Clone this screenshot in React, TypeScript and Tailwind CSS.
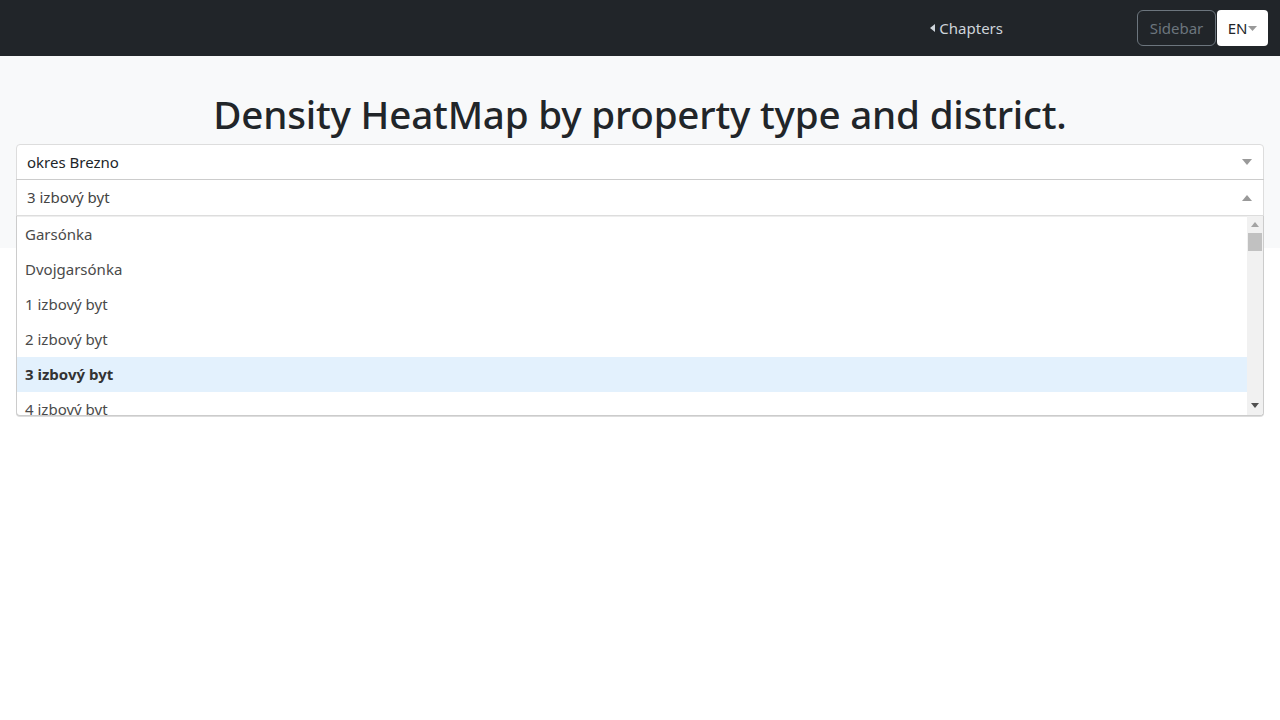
import React from 'react';

const options = ['Garsónka', 'Dvojgarsónka', '1 izbový byt', '2 izbový byt', '3 izbový byt', '4 izbový byt'];

const Caret = ({ up = false }: { up?: boolean }) => (
  <svg width="10" height="6" viewBox="0 0 10 6" className="text-[#999]">
    {up ? <path d="M0 6 L5 0 L10 6 Z" fill="currentColor" /> : <path d="M0 0 L10 0 L5 6 Z" fill="currentColor" />}
  </svg>
);

export default function App() {
  const selected = '3 izbový byt';
  return (
    <div className="min-h-[720px] bg-white text-[#212529]" style={{ fontFamily: '"Noto Sans", "Open Sans", sans-serif' }}>
      <nav className="h-14 bg-[#212529] flex items-center justify-end pr-3">
        <a className="flex items-center gap-1 text-[15px] text-[#ced4da] mr-[134px]">
          <svg width="5" height="8" viewBox="0 0 5 8">
            <path d="M5 0 L0 4 L5 8 Z" fill="#ced4da" />
          </svg>
          Chapters
        </a>
        <button className="h-9 w-[79px] rounded-md border border-[#6c757d] text-[#6c757d] text-[15px]">Sidebar</button>
        <button className="h-9 w-[51px] ml-px rounded bg-white text-[#212529] text-[15px] flex items-center justify-center gap-px">
          EN
          <svg width="9" height="5" viewBox="0 0 9 5">
            <path d="M0 0 L9 0 L4.5 5 Z" fill="#999" />
          </svg>
        </button>
      </nav>

      <section className="bg-[#f8f9fa] pt-[34px] pb-8 px-4">
        <h1 className="text-center text-[38.6px] font-medium leading-[48px] mb-[6px] tracking-[-0.2px]">
          Density HeatMap by property type and district.
        </h1>
        <div className="h-9 bg-white border border-[#ddd] rounded-t-[4px] flex items-center justify-between pl-[10px] pr-[11px] text-[15px]">
          <span>okres Brezno</span>
          <Caret />
        </div>
        <div className="relative">
          <div className="h-9 bg-white border border-t-0 border-[#ddd] shadow-[0_-1px_0_#ccc] flex items-center justify-between pl-[10px] pr-[11px] text-[15px] text-[#444]">
            <span>{selected}</span>
            <Caret up />
          </div>
          <div className="absolute left-0 right-0 top-9 z-10 h-[200px] bg-white border border-t-0 border-[#ccc] rounded-b-[4px] flex overflow-hidden shadow-[0_1px_0_#ddd]">
            <div className="flex-1 overflow-hidden border-t border-[#eee]">
              {options.map(o => (
                <div
                  key={o}
                  className={`h-[35px] flex items-center pl-2 text-[15px] text-[#4a4a4a] ${o === selected ? 'bg-[#e3f1fd] font-bold text-[#333]' : ''}`}
                >
                  {o}
                </div>
              ))}
            </div>
            <div className="w-4 bg-[#f1f1f1] flex flex-col items-center">
              <svg width="8" height="5" viewBox="0 0 8 5" className="mt-[6px]">
                <path d="M0 5 L4 0 L8 5 Z" fill="#a3a3a3" />
              </svg>
              <div className="mt-[6px] w-[14px] h-[18px] bg-[#c1c1c1]" />
              <div className="flex-1" />
              <svg width="8" height="5" viewBox="0 0 8 5" className="mb-[7px]">
                <path d="M0 0 L8 0 L4 5 Z" fill="#505050" />
              </svg>
            </div>
          </div>
        </div>
      </section>
    </div>
  );
}
